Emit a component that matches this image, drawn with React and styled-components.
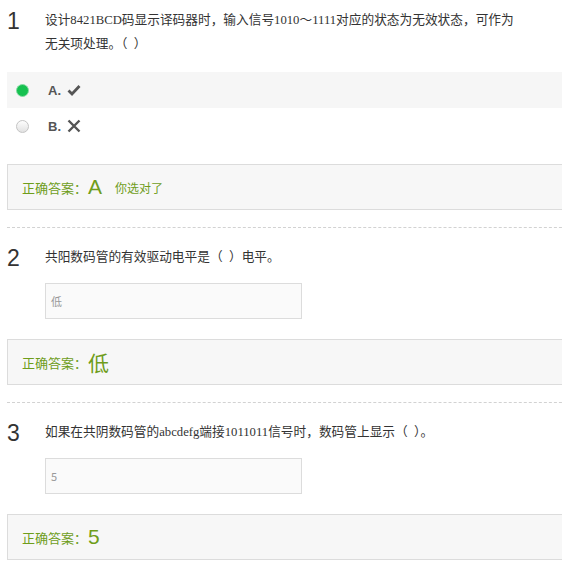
import React from "react";
import styled, { createGlobalStyle } from "styled-components";

const Global = createGlobalStyle`
body{
  margin:0;
  background:#fff;
  overflow:hidden;
}
`

const Page = styled.div`
margin-left:7px;
margin-right:-20px;
`

const Question = styled.div`
padding-top:${(p) => (p.first ? "8px" : "17px")};
`

const Head = styled.div`
display:flex;
align-items:flex-start;
`

const Num = styled.div`
width:38px;
flex:none;
font-family:"Liberation Sans", Arial, sans-serif;
font-size:23px;
line-height:24px;
color:#333;
margin-top:1px;
margin-bottom:-1px;
`

const Text = styled.div`
width:475px;
font-family:"Liberation Serif", "Noto Sans CJK SC", serif;
font-size:12.7px;
line-height:24px;
color:#333;
`

const Options = styled.div`
margin-top:16px;
`

const Option = styled.div`
display:flex;
align-items:center;
height:36px;
padding-left:9px;
background:${(p) => (p.active ? "#f6f6f6" : "transparent")};
`

const Radio = styled.span`
width:11px;
height:11px;
border-radius:50%;
flex:none;
border:1px solid ${(p) => (p.checked ? "#86dba3" : "#c4c4c4")};
background:${(p) =>
  p.checked
    ? "#16c150"
    : "linear-gradient(#fdfdfd, #e2e2e2)"};
`

const Label = styled.span`
display:flex;
align-items:center;
gap:6px;
margin-left:19px;
font-family:"Liberation Sans", Arial, sans-serif;
font-size:13px;
font-weight:bold;
color:#555;
`

const AnswerBox = styled.div`
margin-top:20px;
height:46px;
box-sizing:border-box;
display:flex;
align-items:center;
padding-left:14px;
border:1px solid #dcdcdc;
background:#f7f7f7;
color:#6f9d1b;
font-family:"Noto Sans CJK SC", sans-serif;
font-size:13px;
`

const Big = styled.span`
font-family:"Liberation Sans", "Noto Sans CJK SC", sans-serif;
font-size:21px;
margin-left:1px;
`

const Small = styled.span`
font-size:12px;
margin-left:13px;
`

const Divider = styled.div`
margin-top:17px;
border-top:1px dashed #d2d2d2;
`

const Blank = styled.div`
margin-top:14px;
margin-left:38px;
width:250px;
height:34px;
border:1px solid #dcdcdc;
background:#fafafa;
display:flex;
align-items:center;
padding-left:5px;
box-sizing:content-box;
font-family:"Noto Sans CJK SC", "Liberation Sans", sans-serif;
font-size:11px;
color:#999;
`

const Check = () => (
  <svg width="14" height="12" viewBox="0 0 14 12">
    <path d="M1.5 6.5 L5 10 L12.5 2" fill="none" stroke="#555" strokeWidth="2.8" />
  </svg>
)

const Cross = () => (
  <svg width="14" height="14" viewBox="0 0 14 14">
    <path d="M1.5 1.5 L12.5 12.5 M12.5 1.5 L1.5 12.5" fill="none" stroke="#555" strokeWidth="2.4" />
  </svg>
)

const Answer = ({ value, note }) => (
  <AnswerBox>
    正确答案：<Big>{value}</Big>
    {note && <Small>{note}</Small>}
  </AnswerBox>
)

const gap = "\u00a0\u00a0"

export default function App() {
  return (
    <>
      <Global />
      <Page>
        <Question first>
          <Head>
            <Num>1</Num>
            <Text>设计8421BCD码显示译码器时，输入信号1010～1111对应的状态为无效状态，可作为无关项处理。（{gap}）</Text>
          </Head>
          <Options>
            <Option active>
              <Radio checked />
              <Label>A.<Check /></Label>
            </Option>
            <Option>
              <Radio />
              <Label>B.<Cross /></Label>
            </Option>
          </Options>
          <Answer value="A" note="你选对了" />
        </Question>
        <Divider />
        <Question>
          <Head>
            <Num>2</Num>
            <Text>共阳数码管的有效驱动电平是（{gap}）电平。</Text>
          </Head>
          <Blank>低</Blank>
          <Answer value="低" />
        </Question>
        <Divider />
        <Question>
          <Head>
            <Num>3</Num>
            <Text>如果在共阴数码管的abcdefg端接1011011信号时，数码管上显示（{gap}）。</Text>
          </Head>
          <Blank>5</Blank>
          <Answer value="5" />
        </Question>
      </Page>
    </>
  )
}
